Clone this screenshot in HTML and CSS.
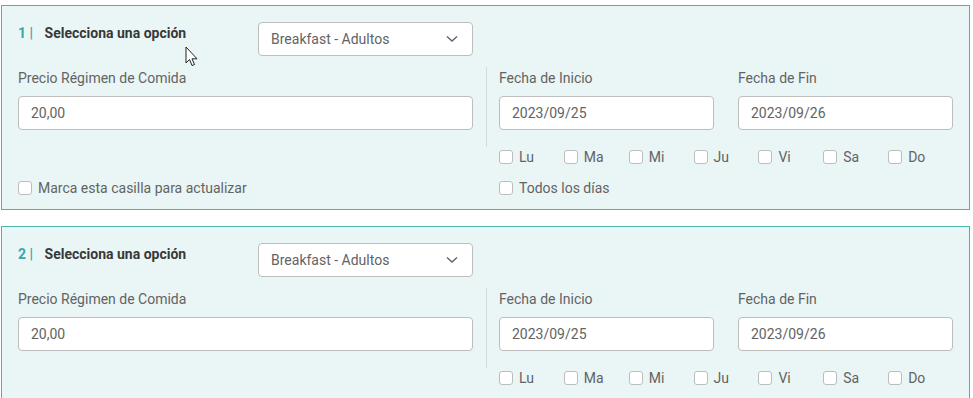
FILE: index.html
```html
<!DOCTYPE html>
<html lang="es">
<head>
  <meta charset="UTF-8">
  <meta name="viewport" content="width=device-width, initial-scale=1.0">
  <title>Régimen de Comida</title>
  <link rel="stylesheet" href="styles.css">
</head>
<body>
  <div class="card">
    <div class="card-head">
      <div class="title"><span class="num">1 |</span> Selecciona una opción</div>
      <div class="select">
        <span>Breakfast - Adultos</span>
        <svg class="chevron" width="12" height="8" viewBox="0 0 12 8"><path d="M1 1.5 L6 6 L11 1.5" fill="none" stroke="#6b5b70" stroke-width="1.4"/></svg>
      </div>
    </div>
    <div class="card-body">
      <div class="field">
        <label>Precio Régimen de Comida</label>
        <div class="input">20,00</div>
      </div>
      <div class="dates">
        <div class="field">
          <label>Fecha de Inicio</label>
          <div class="input">2023/09/25</div>
        </div>
        <div class="field">
          <label>Fecha de Fin</label>
          <div class="input">2023/09/26</div>
        </div>
      </div>
      <div></div>
      <div class="days">
        <div class="check"><span class="box"></span>Lu</div>
        <div class="check"><span class="box"></span>Ma</div>
        <div class="check"><span class="box"></span>Mi</div>
        <div class="check"><span class="box"></span>Ju</div>
        <div class="check"><span class="box"></span>Vi</div>
        <div class="check"><span class="box"></span>Sa</div>
        <div class="check"><span class="box"></span>Do</div>
      </div>
      <div class="check last"><span class="box"></span>Marca esta casilla para actualizar</div>
      <div class="check last"><span class="box"></span>Todos los días</div>
    </div>
    <svg class="cursor" width="14" height="22" viewBox="0 0 14 22"><path d="M1 1 L1 17 L4.5 13.5 L7 19.5 L9.5 18.5 L7 12.8 L12 12.8 Z" fill="#fff" stroke="#222" stroke-width="1" stroke-linejoin="round"/></svg>
  </div>

  <div class="card">
    <div class="card-head">
      <div class="title"><span class="num">2 |</span> Selecciona una opción</div>
      <div class="select">
        <span>Breakfast - Adultos</span>
        <svg class="chevron" width="12" height="8" viewBox="0 0 12 8"><path d="M1 1.5 L6 6 L11 1.5" fill="none" stroke="#6b5b70" stroke-width="1.4"/></svg>
      </div>
    </div>
    <div class="card-body">
      <div class="field">
        <label>Precio Régimen de Comida</label>
        <div class="input">20,00</div>
      </div>
      <div class="dates">
        <div class="field">
          <label>Fecha de Inicio</label>
          <div class="input">2023/09/25</div>
        </div>
        <div class="field">
          <label>Fecha de Fin</label>
          <div class="input">2023/09/26</div>
        </div>
      </div>
      <div></div>
      <div class="days">
        <div class="check"><span class="box"></span>Lu</div>
        <div class="check"><span class="box"></span>Ma</div>
        <div class="check"><span class="box"></span>Mi</div>
        <div class="check"><span class="box"></span>Ju</div>
        <div class="check"><span class="box"></span>Vi</div>
        <div class="check"><span class="box"></span>Sa</div>
        <div class="check"><span class="box"></span>Do</div>
      </div>
      <div class="check last"><span class="box"></span>Marca esta casilla para actualizar</div>
      <div class="check last"><span class="box"></span>Todos los días</div>
    </div>
  </div>
</body>
</html>
```

FILE: styles.css
```css
body {
  font-family: Roboto, "Liberation Sans", Arial, sans-serif;
  font-size: 14px;
  color: #636363;
  background-color: #fff;
  margin: 0;
  padding: 5px 3px 0 1px;
  height: 398px;
  box-sizing: border-box;
  overflow: hidden;
}
.card {
  position: relative;
  background-color: #eaf6f6;
  border: 1px solid #4bb3b0;
  padding: 16px 16px 11px 16px;
  margin-bottom: 16px;
}
.card-head {
  display: grid;
  grid-template-columns: 1fr 1fr;
  column-gap: 25px;
  width: 455px;
}
.title {
  font-size: 14px;
  font-weight: bold;
  color: #383838;
  line-height: 20px;
  padding-top: 1px;
}
.title .num {
  color: #3aa6ae;
  margin-right: 8px;
}
.select {
  height: 34px;
  box-sizing: border-box;
  background-color: #fff;
  border: 1px solid #bdbdbd;
  border-radius: 4px;
  padding: 0 14px 0 12px;
  display: flex;
  align-items: center;
  justify-content: space-between;
}
.chevron {
  display: block;
}
.card-body {
  display: grid;
  grid-template-columns: 455fr 467fr;
  column-gap: 13px;
  margin-top: 11px;
}
.field label {
  display: block;
  line-height: 22px;
  margin-bottom: 7px;
}
.input {
  height: 34px;
  box-sizing: border-box;
  background-color: #fff;
  border: 1px solid #bdbdbd;
  border-radius: 4px;
  padding: 0 12px;
  display: flex;
  align-items: center;
}
.card-body > .field {
  padding-bottom: 17px;
}
.dates {
  display: grid;
  grid-template-columns: 1fr 1fr;
  column-gap: 24px;
  border-left: 1px solid #cfdcdc;
  padding-left: 12px;
  padding-bottom: 17px;
}
.days {
  display: grid;
  grid-template-columns: repeat(7, 1fr);
  padding-left: 13px;
}
.check {
  display: flex;
  align-items: center;
  line-height: 20px;
}
.check.last {
  margin-top: 11px;
}
.card-body > .check:last-child {
  padding-left: 13px;
}
.box {
  width: 14px;
  height: 14px;
  box-sizing: border-box;
  background-color: #fff;
  border: 1px solid #bdbdbd;
  border-radius: 3px;
  margin-right: 6px;
}
.cursor {
  position: absolute;
  left: 183px;
  top: 40px;
}
```
